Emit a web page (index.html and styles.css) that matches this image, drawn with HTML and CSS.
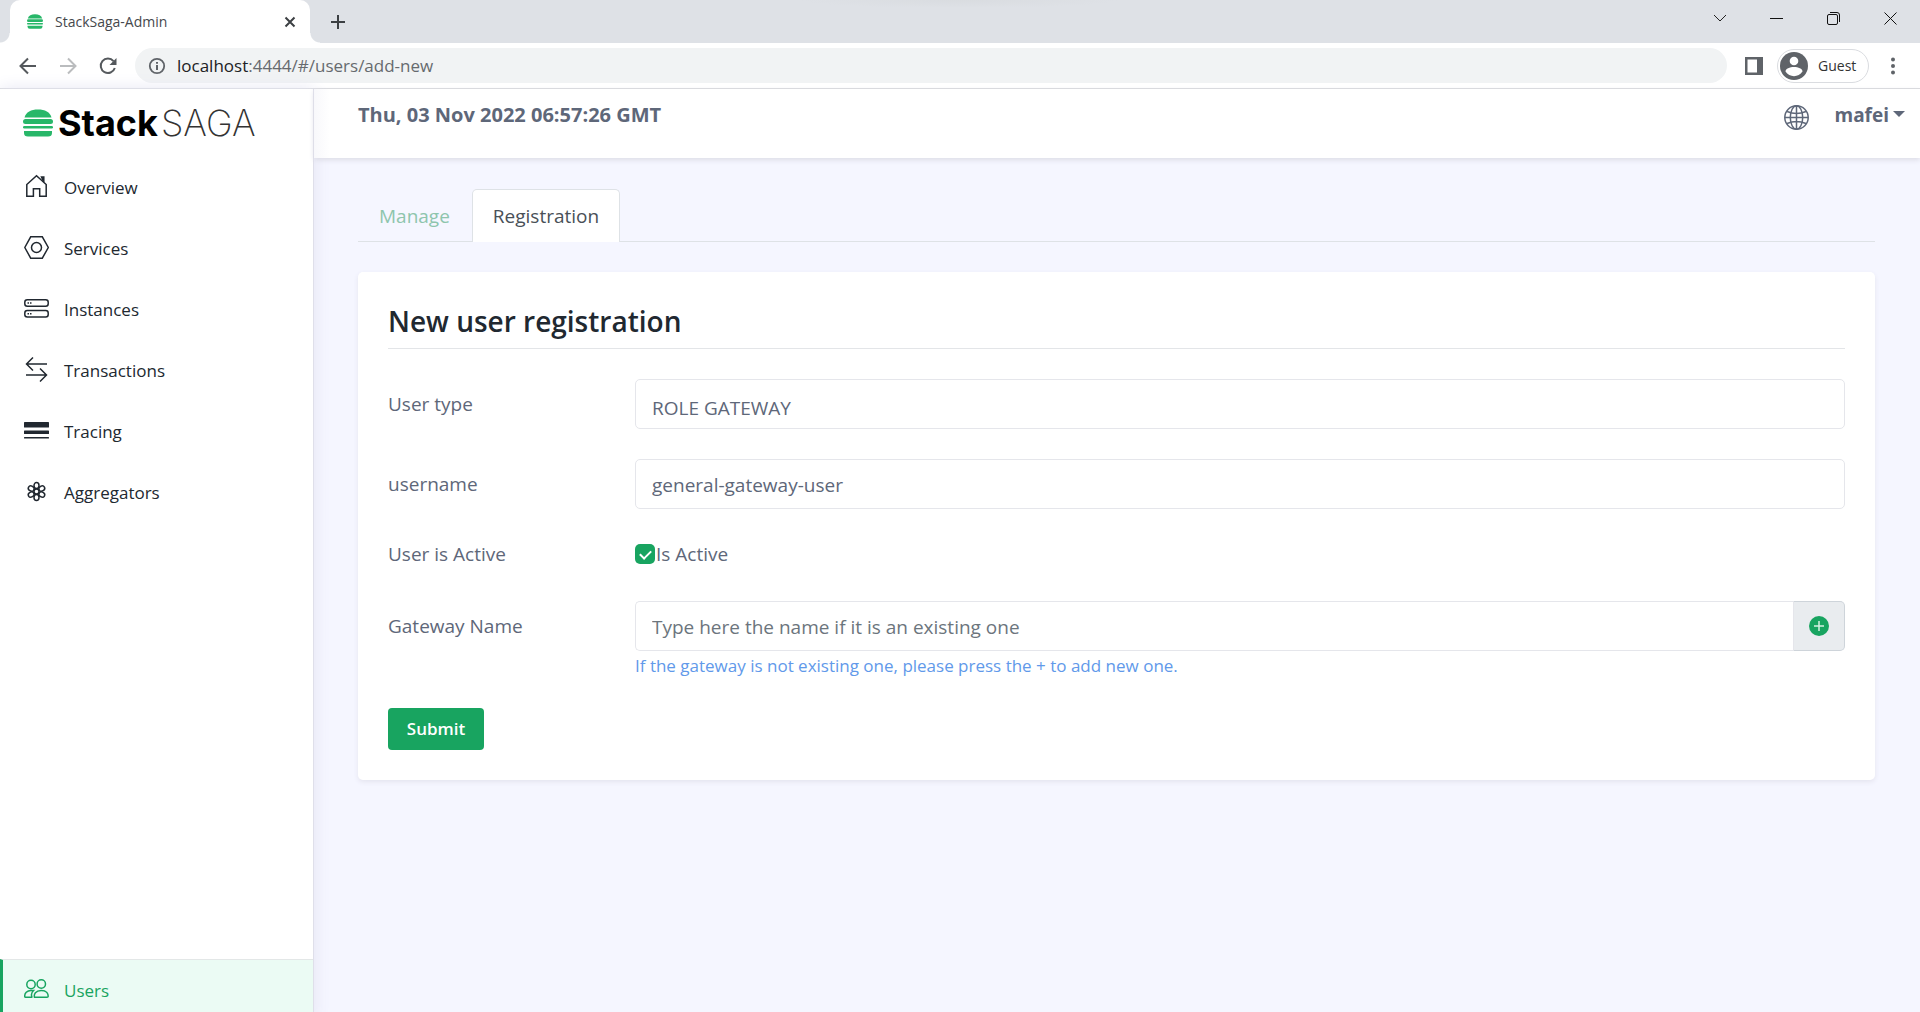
FILE: index.html
```html
<!DOCTYPE html>
<html lang="en">
<head>
<meta charset="utf-8">
<title>StackSaga-Admin</title>
<link rel="stylesheet" href="styles.css">
</head>
<body>
<div class="browser">
  <div class="tabstrip">
    <div class="browser-tab">
      <svg class="favicon" viewBox="0 0 30 28"><use href="#stack"/></svg>
      <span class="browser-tab-title">StackSaga-Admin</span>
      <button class="chrome-button" aria-label="Close tab"><svg width="12" height="12" viewBox="0 0 12 12"><path d="M1.5 1.5l9 9M10.5 1.5l-9 9" stroke="#3c4043" stroke-width="2"/></svg></button>
    </div>
    <button class="chrome-button new-tab" aria-label="New tab"><svg width="16" height="16" viewBox="0 0 16 16"><path d="M8 1v14M1 8h14" stroke="#3c4043" stroke-width="2"/></svg></button>
    <div class="window-controls">
      <button class="chrome-button" aria-label="Search tabs"><svg width="14" height="14" viewBox="0 0 14 14"><path d="M1 3l6 6 6-6" fill="none" stroke="#222"/></svg></button>
      <button class="chrome-button" aria-label="Minimize"><svg width="14" height="14" viewBox="0 0 14 14"><path d="M0 6.5h13" stroke="#111"/></svg></button>
      <button class="chrome-button" aria-label="Restore"><svg width="14" height="14" viewBox="0 0 14 14"><rect x=".5" y="2.5" width="10" height="10" rx="1.5" fill="none" stroke="#111"/><path d="M3 .5h7q2.500 0 2.500 2.500v7" fill="none" stroke="#111"/></svg></button>
      <button class="chrome-button" aria-label="Close"><svg width="14" height="14" viewBox="0 0 14 14"><path d="M.5.5l12 12M12.500.5l-12 12" stroke="#111"/></svg></button>
    </div>
  </div>
  <div class="toolbar">
    <button class="chrome-button" aria-label="Back"><svg width="18" height="18" viewBox="0 0 18 18"><path d="M17 9H2M9 1.500L1.500 9 9 16.500" fill="none" stroke="#54585c" stroke-width="2"/></svg></button>
    <button class="chrome-button" aria-label="Forward"><svg width="18" height="18" viewBox="0 0 18 18"><path d="M1 9h15M9 1.500L16.500 9 9 16.500" fill="none" stroke="#babcbe" stroke-width="2"/></svg></button>
    <button class="chrome-button" aria-label="Reload"><svg width="18" height="18" viewBox="0 0 18 18"><path d="M14.500 4.200A7.200 7.200 0 1 0 15.800 11" fill="none" stroke="#54585c" stroke-width="2"/><path d="M17.500 1v7h-7z" fill="#54585c"/></svg></button>
    <label class="address">
      <svg width="18" height="18" viewBox="0 0 18 18"><circle cx="9" cy="9" r="7.200" fill="none" stroke="#5f6368" stroke-width="1.800"/><path d="M9 8v5M9 5v1.800" stroke="#5f6368" stroke-width="2"/></svg>
      <span class="address-text"><span class="address-host">localhost</span>:4444/#/users/add-new</span>
    </label>
    <button class="chrome-button side-panel" aria-label="Side panel"><svg width="18" height="18" viewBox="0 0 18 18"><path fill-rule="evenodd" d="M0 0h18v18H0zM2.500 2.500v13H12v-13z" fill="#5f6368"/></svg></button>
    <button class="guest"><svg width="28" height="28" viewBox="0 0 28 28"><circle cx="14" cy="14" r="14" fill="#5f6368"/><circle cx="14" cy="9" r="4.300" fill="#fff"/><path d="M5.500 19.500c0-6 17-6 17 0-4 6.200-13 6.200-17 0z" fill="#fff"/></svg>Guest</button>
    <button class="chrome-button menu" aria-label="Menu"><svg width="4" height="18" viewBox="0 0 4 18"><circle cx="2" cy="2.500" r="2"/><circle cx="2" cy="9" r="2"/><circle cx="2" cy="15.500" r="2"/></svg></button>
  </div>
</div>

<div class="app">
  <aside class="sidebar">
    <a class="brand" href="#/">
      <svg class="brand-mark" viewBox="0 0 30 28"><g id="stack" fill="#28b769"><path d="M1.500 8.500C3 3 8 .5 15 .5s12 2.500 13.500 8z"/><rect y="10" width="30" height="5" rx="2.500"/><rect x="0" y="17" width="30" height="2.500" rx="1.200"/><path d="M1 22h28v2q0 3.500-4 3.500H5q-4 0-4-3.500z"/></g></svg>
      <span class="brand-stack">Stack</span><span class="brand-saga">SAGA</span>
    </a>
    <nav class="side-nav">
      <a class="side-link" href="#/overview"><svg class="icon" viewBox="0 0 25 25"><path d="M2.800 22.300V10.500L12.500 1.800l9.700 8.700v11.800h-6.500v-7.500h-6.300v7.500z"/><path d="M17.500 3h2.300v5z" fill="currentColor"/></svg>Overview</a>
      <a class="side-link" href="#/services"><svg class="icon" viewBox="0 0 25 25"><path d="M6.700 1.800h11.600l6 10.700-6 10.700H6.700L.8 12.500z"/><circle cx="12.500" cy="12.500" r="5"/></svg>Services</a>
      <a class="side-link" href="#/instances"><svg class="icon" viewBox="0 0 25 25"><rect x=".8" y="3.800" width="23.400" height="6.500" rx="2.500"/><rect x=".8" y="14.500" width="23.400" height="6.500" rx="2.500"/><path d="M3.500 7h1.500m1 0h1.500M3.500 17.800h1.500m1 0h1.500"/></svg>Instances</a>
      <a class="side-link" href="#/transactions"><svg class="icon" viewBox="0 0 25 25"><path d="M23 7H2.500M9 .5L2.500 7 9 13.500M2 18h20.500M16 11.500l6.500 6.500-6.500 6.500"/></svg>Transactions</a>
      <a class="side-link" href="#/tracing"><svg class="icon" viewBox="0 0 25 25"><g fill="currentColor" stroke="none"><rect y="4" width="25" height="5.500" rx=".6"/><rect y="12.500" width="25" height="3.500" rx=".6"/><rect y="19" width="25" height="1.500" rx=".6"/></g></svg>Tracing</a>
      <a class="side-link" href="#/aggregators"><svg class="icon" viewBox="0 0 25 25"><g id="petals"><ellipse cx="12.500" cy="6.500" rx="2.500" ry="3"/><ellipse cx="12.500" cy="18.500" rx="2.500" ry="3"/><ellipse cx="7.200" cy="9.500" rx="3" ry="2.500" transform="rotate(30 7.200 9.500)"/><ellipse cx="17.800" cy="15.500" rx="3" ry="2.500" transform="rotate(30 17.800 15.500)"/><ellipse cx="17.800" cy="9.500" rx="3" ry="2.500" transform="rotate(-30 17.800 9.500)"/><ellipse cx="7.200" cy="15.500" rx="3" ry="2.500" transform="rotate(-30 7.200 15.500)"/><circle cx="12.500" cy="12.500" r="2.500"/></g></svg>Aggregators</a>
    </nav>
    <a class="side-link side-link-active" href="#/users"><svg class="icon" viewBox="0 0 25 25"><circle cx="7" cy="7.500" r="4.200"/><circle cx="17.300" cy="7" r="4.200"/><path d="M10.500 20.200c-.8-3 1-6.700 6.700-6.700s7 3.700 7 5.700q0 1-1.200 1zM8.500 20.200H1.500q-.8 0-.8-1.200c0-2.500 2-5.500 6.300-5.500h2.500c-2 2-2.500 4.500-1.500 6.700"/></svg>Users</a>
  </aside>

  <div class="page">
    <header class="topbar">
      <time class="clock">Thu, 03 Nov 2022 06:57:26 GMT</time>
      <div class="topbar-actions">
        <button class="plain-button" aria-label="Language"><svg class="globe" viewBox="0 0 25 25"><circle cx="12.500" cy="12.500" r="11.700"/><ellipse cx="12.500" cy="12.500" rx="6.200" ry="11.700"/><path d="M12.500.8v23.400M.8 12.500h23.400M3 6.500q9.500 4 19 0M3 18.500q9.500-4 19 0"/></svg></button>
        <button class="plain-button account">mafei<span class="caret"></span></button>
      </div>
    </header>

    <main class="content">
      <nav class="tabs">
        <a class="tab" href="#/users/manage">Manage</a>
        <a class="tab tab-active" href="#/users/add-new" aria-current="page">Registration</a>
      </nav>

      <form class="card">
        <h1 class="card-title">New user registration</h1>
        <div class="field">
          <label class="field-label" for="user-type">User type</label>
          <select class="control control-select" id="user-type"><option>ROLE GATEWAY</option></select>
        </div>
        <div class="field">
          <label class="field-label" for="username">username</label>
          <input class="control" id="username" type="text" value="general-gateway-user">
        </div>
        <div class="field field-check">
          <span class="field-label">User is Active</span>
          <label class="check"><input class="check-box" type="checkbox" checked>Is Active</label>
        </div>
        <div class="field">
          <label class="field-label" for="gateway">Gateway Name</label>
          <div class="field-body">
            <div class="input-group">
              <input class="control" id="gateway" type="text" placeholder="Type here the name if it is an existing one">
              <button class="add-button" type="button" aria-label="Add gateway"><svg width="20" height="20" viewBox="0 0 20 20"><circle cx="10" cy="10" r="10" fill="#18a460"/><path d="M10 5v10M5 10h10" stroke="#d5f0e1" stroke-width="1.500"/></svg></button>
            </div>
            <p class="hint">If the gateway is not existing one, please press the + to add new one.</p>
          </div>
        </div>
        <button class="submit" type="button">Submit</button>
      </form>
    </main>
  </div>
</div>
</body>
</html>
```
FILE: styles.css
```css
* {
  box-sizing: border-box;
}

body {
  margin: 0;
  height: 100vh;
  overflow: hidden;
  background: #f5f6ff;
  color: #5e6779;
  font: 19px/30px "Open Sans", "Noto Sans", sans-serif;
}

a {
  color: inherit;
  text-decoration: none;
}

button {
  font: inherit;
  color: inherit;
}

/* Browser window */
.browser {
  height: 89px;
  border-bottom: 1px solid #d9dadd;
  background: #fff;
}

.tabstrip {
  display: flex;
  align-items: center;
  height: 43px;
  background:
    radial-gradient(ellipse 160px 8px at 50% 0, #d9dce0, transparent),
    #dee1e6;
}

.browser-tab {
  position: relative;
  display: flex;
  align-items: center;
  width: 300px;
  height: 43px;
  margin-left: 10px;
  padding: 0 14px 0 17px;
  border-radius: 10px 10px 0 0;
  background: #fff;
}

.browser-tab::before,
.browser-tab::after {
  content: "";
  position: absolute;
  bottom: 0;
  width: 10px;
  height: 10px;
}

.browser-tab::before {
  right: 100%;
  background: radial-gradient(circle at 0 0, transparent 9px, #fff 10px);
}

.browser-tab::after {
  left: 100%;
  background: radial-gradient(circle at 100% 0, transparent 9px, #fff 10px);
}

.favicon {
  width: 16px;
  height: 15px;
}

.browser-tab-title {
  flex: 1;
  margin-left: 12px;
  color: #45484c;
  font-size: 14px;
}

.chrome-button {
  display: flex;
  padding: 0;
  border: 0;
  background: none;
}

.new-tab {
  margin-left: 20px;
}

.window-controls {
  display: flex;
  gap: 43px;
  margin: -6px 22px 0 auto;
}

.toolbar {
  display: flex;
  align-items: center;
  height: 45px;
  padding: 0 25px 0 19px;
  gap: 22px;
}

.address {
  display: flex;
  flex: 1;
  align-items: center;
  gap: 11px;
  height: 35px;
  margin-left: -4px;
  padding-left: 13px;
  border-radius: 18px;
  background: #f1f3f4;
  color: #666a6e;
  font-size: 17px;
}

.address-host {
  color: #202124;
}

.side-panel {
  margin-left: -4px;
}

.guest {
  display: flex;
  align-items: center;
  gap: 10px;
  width: 92px;
  height: 34px;
  margin-left: -8px;
  padding: 0 0 0 2px;
  border: 1px solid #dadce0;
  border-radius: 17px;
  background: #fff;
  color: #333;
  font-size: 14px;
}

.menu {
  fill: #5f6368;
}

/* Application shell */
.app {
  display: flex;
  height: calc(100vh - 80px);
}

.sidebar {
  display: flex;
  flex-direction: column;
  width: 314px;
  border-right: 1px solid #dfdfea;
  background: #fff;
  box-shadow: 0 0 16px #e4e4f2;
}

.brand {
  display: flex;
  align-items: center;
  height: 68px;
  padding-left: 23px;
  color: #000;
}

.brand-mark {
  width: 30px;
  height: 28px;
}

.brand-stack {
  margin-left: 5px;
  font: 700 36px/40px Inter, sans-serif;
}

.brand-saga {
  margin-left: 3px;
  color: #333;
  font: 200 36px/40px Inter, sans-serif;
}

.side-nav {
  flex: 1;
}

.side-link {
  display: flex;
  align-items: center;
  gap: 15px;
  height: 61px;
  padding-left: 24px;
  color: #212830;
  font-size: 17px;
}

.icon,
.globe {
  width: 25px;
  height: 25px;
  fill: none;
  stroke: currentColor;
  stroke-width: 1.5;
}

.icon {
  margin-bottom: 2px;
}

.side-link-active {
  height: 62px;
  padding-left: 21px;
  border-top: 1px solid #e3e7e7;
  border-left: 3px solid #18a460;
  background: #ebfbf4;
  color: #18a460;
}

.page {
  flex: 1;
}

.topbar {
  display: flex;
  justify-content: space-between;
  height: 69px;
  padding: 11px 15px 0 44px;
  background: linear-gradient(90deg, #f8f8fb, #fff 16px);
  box-shadow: 0 2px 5px #dcdce6;
  font-weight: 700;
}

.clock {
  font-size: 20px;
}

.topbar-actions {
  display: flex;
  align-items: flex-start;
  gap: 25px;
}

.plain-button {
  display: flex;
  align-items: center;
  padding: 0;
  border: 0;
  background: none;
}

.globe {
  margin-top: 5px;
}

.caret {
  margin: 0 0 3px 4px;
  border: 6px solid transparent;
  border-top-color: currentColor;
  border-bottom: 0;
}

/* Registration page */
.content {
  padding: 31px 45px 0 44px;
}

.tabs {
  display: flex;
  height: 53px;
  border-bottom: 1px solid #dee2e6;
}

.tab {
  height: 53px;
  padding: 11px 20px;
  border: 1px solid transparent;
  border-bottom: 0;
  border-radius: 5px 5px 0 0;
  color: #8ec5ad;
}

.tab-active {
  margin-left: 1px;
  border-color: #dee2e6;
  background: #fff;
  color: #495057;
}

.card {
  margin-top: 30px;
  padding: 30px;
  border-radius: 5px;
  background: #fff;
  box-shadow: 0 2px 5px #e4e4ef;
}

.card-title {
  height: 47px;
  margin: 0 0 30px;
  border-bottom: 1px solid #e3e5e8;
  color: #212830;
  font-size: 28px;
  font-weight: 600;
  line-height: 38px;
}

.field {
  display: flex;
  align-items: flex-start;
  margin-bottom: 30px;
}

.field-label {
  width: 247px;
  padding-top: 10px;
}

.field-body {
  flex: 1;
}

.control {
  flex: 1;
  min-width: 0;
  height: 50px;
  padding: 2px 16px 0;
  border: 1px solid #e5e6eb;
  border-radius: 5px;
  background: #fff;
  color: #5e6779;
  font: inherit;
}

.control::placeholder {
  color: #6c757d;
  opacity: 1;
}

.control-select {
  appearance: none;
  padding-top: 8px;
}

.field-check {
  margin-bottom: 32px;
}

.field-check .field-label {
  padding: 0;
}

.check {
  display: flex;
  align-items: center;
}

.check-box {
  display: flex;
  align-items: center;
  justify-content: center;
  width: 20px;
  height: 20px;
  margin: 0 1px 0 0;
  border-radius: 5px;
  background: #18a460;
  appearance: none;
}

.check-box::before {
  content: "";
  width: 9px;
  height: 5px;
  border: solid #fff;
  border-width: 0 0 2px 2px;
  transform: translateY(-1px) rotate(-45deg);
}

.input-group {
  display: flex;
}

.input-group .control {
  border-right: 0;
  border-radius: 5px 0 0 5px;
}

.add-button {
  display: flex;
  align-items: center;
  justify-content: center;
  width: 52px;
  padding: 0;
  border: 1px solid #ced4da;
  border-left-color: #e5e6eb;
  border-radius: 0 5px 5px 0;
  background: #e9ecef;
}

.hint {
  margin: 0;
  color: #6199ea;
  font-size: 17px;
}

.submit {
  display: block;
  width: 96px;
  height: 42px;
  margin-top: -3px;
  padding: 0;
  border: 0;
  border-radius: 4px;
  background: #18a460;
  color: #fff;
  font-size: 17px;
  font-weight: 600;
}
```
